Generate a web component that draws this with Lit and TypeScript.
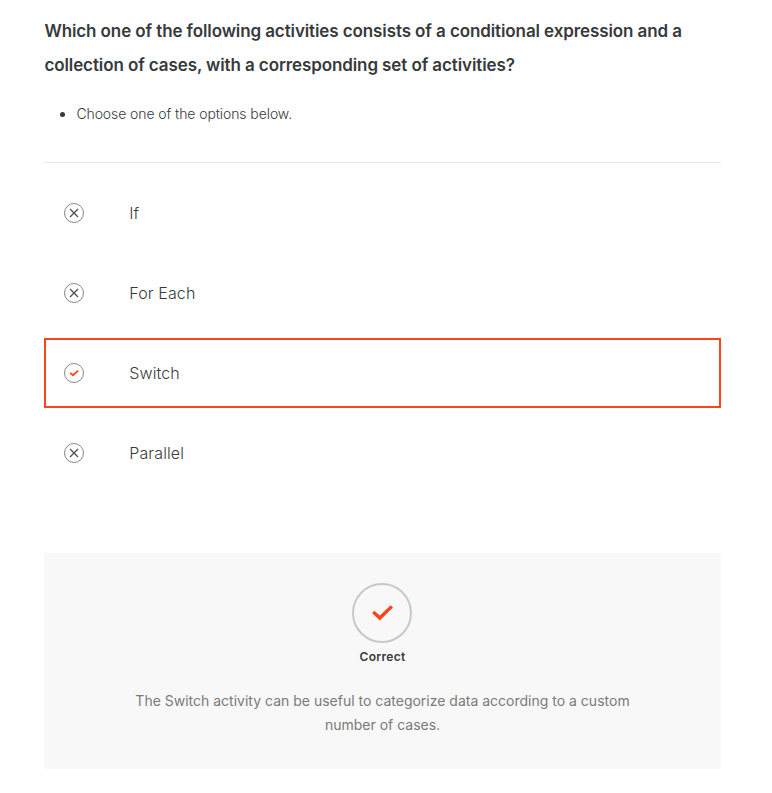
import { LitElement, html, css, svg } from "lit";
import { customElement, property } from "lit/decorators.js";

@customElement("option-mark")
class OptionMark extends LitElement {
  @property({ type: Boolean }) correct = false;
  static styles = css`
    :host { display: block; width: 22px; height: 22px; }
    svg { display: block; }
    .ring { fill: none; stroke: #888; stroke-width: 1; }
    .cross { fill: none; stroke: #4a4d50; stroke-width: 1.2; }
    .tick { fill: none; stroke: #fa4616; stroke-width: 1.8; }
  `;
  render() {
    return html`<svg width="22" height="22" viewBox="0 0 22 22">
      <circle class="ring" cx="11" cy="11" r="9.5"></circle>
      ${this.correct
        ? svg`<path class="tick" d="M7.3 10.9 L10 13.2 L15.2 8.6"></path>`
        : svg`<path class="cross" d="M7 7 L15 15 M15 7 L7 15"></path>`}
    </svg>`;
  }
}

@customElement("app-root")
class AppRoot extends LitElement {
  options = ["If", "For Each", "Switch", "Parallel"];
  answer = "Switch";
  static styles = css`
    :host { display: block; box-sizing: border-box; height: 793px; padding: 14px 51px 0 44px; background: #fff; color: #373a3d; font-family: Inter, sans-serif; }
    h1 { margin: 0; padding-left: 0.4px; font-size: 17px; line-height: 34px; font-weight: 600; letter-spacing: -0.1px; }
    ul { margin: 20px 0 0; padding: 0 0 0 32.4px; font-size: 14px; line-height: 24px; font-weight: 300; letter-spacing: -0.09px; }
    .options { margin-top: 36px; border-top: 1px solid #e8e8e8; padding-top: 15px; display: flex; flex-direction: column; gap: 10px; }
    .option { box-sizing: border-box; height: 70px; border: 2px solid transparent; display: flex; align-items: center; padding-left: 17px; font-size: 16px; font-weight: 300; letter-spacing: 0.12px; }
    .option.chosen { border-color: #fa4616; }
    option-mark { margin-right: 44.3px; }
    .feedback { box-sizing: border-box; margin-top: 65px; height: 216px; padding-top: 30px; background: #f8f8f8; display: flex; flex-direction: column; align-items: center; }
    .badge { display: block; margin-right: 1px; }
    .badge-ring { fill: none; stroke: #c8c8c8; stroke-width: 2; }
    .badge-tick { fill: #fa4616; }
    .verdict { margin-top: 4px; font-size: 12px; line-height: 20px; font-weight: 600; letter-spacing: 0.3px; }
    .note { margin: 22px 0 0; width: 510px; text-align: center; color: #7a7a7a; font-size: 14px; line-height: 24px; }
  `;
  render() {
    return html`
      <h1>Which one of the following activities consists of a conditional expression and a<br />collection of cases, with a corresponding set of activities?</h1>
      <ul><li>Choose one of the options below.</li></ul>
      <div class="options">
        ${this.options.map((o) => html`<div class="option ${o === this.answer ? "chosen" : ""}">
          <option-mark ?correct=${o === this.answer}></option-mark><span>${o}</span>
        </div>`)}
      </div>
      <section class="feedback">
        <svg class="badge" width="60" height="60" viewBox="0 0 60 60">
          <circle class="badge-ring" cx="30" cy="30" r="29"></circle>
          <path class="badge-tick" d="M20 30.1 L22.3 27.8 L27.8 32.4 L38.6 22.3 L41 24.5 L27.8 37.6 Z"></path>
        </svg>
        <div class="verdict">Correct</div>
        <p class="note">The Switch activity can be useful to categorize data according to a custom<br />number of cases.</p>
      </section>`;
  }
}
